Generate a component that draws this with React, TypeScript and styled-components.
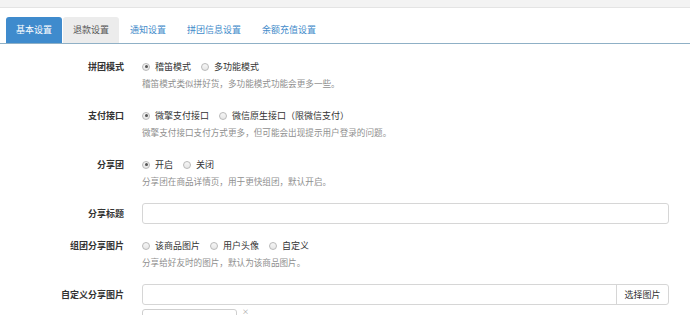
import React, { FC } from 'react'
import styled, { createGlobalStyle } from 'styled-components'

const GlobalStyle = createGlobalStyle`
    html, body {
        margin: 0;
        padding: 0;
        overflow: hidden;
        background: #fff;
        font-family: "Noto Sans CJK SC", "Noto Sans", sans-serif;
        color: #333;
    }
`

const tabs = ['基本设置', '退款设置', '通知设置', '拼团信息设置', '余额充值设置']

interface RadioOption {
    label: string
    checked?: boolean
}

interface FormRow {
    label: string
    kind: 'radio' | 'input' | 'picker'
    options?: RadioOption[]
    help?: string
}

const rows: FormRow[] = [
    {
        label: '拼团模式',
        kind: 'radio',
        options: [{ label: '稽笛模式', checked: true }, { label: '多功能模式' }],
        help: '稽笛模式类似拼好货，多功能模式功能会更多一些。'
    },
    {
        label: '支付接口',
        kind: 'radio',
        options: [{ label: '微擎支付接口', checked: true }, { label: '微信原生接口（限微信支付）' }],
        help: '微擎支付接口支付方式更多，但可能会出现提示用户登录的问题。'
    },
    {
        label: '分享团',
        kind: 'radio',
        options: [{ label: '开启', checked: true }, { label: '关闭' }],
        help: '分享团在商品详情页，用于更快组团，默认开启。'
    },
    { label: '分享标题', kind: 'input' },
    {
        label: '组团分享图片',
        kind: 'radio',
        options: [{ label: '该商品图片' }, { label: '用户头像' }, { label: '自定义' }],
        help: '分享给好友时的图片，默认为该商品图片。'
    },
    { label: '自定义分享图片', kind: 'picker' }
]

const App: FC = () => {
    return (
        <Page>
            <GlobalStyle />
            <TopStrip />
            <TabBar>
                {tabs.map((t, i) => (
                    <Tab key={t} $variant={i === 0 ? 'active' : i === 1 ? 'hover' : 'normal'}>
                        {t}
                    </Tab>
                ))}
            </TabBar>
            <Form>
                {rows.map(row => (
                    <Group key={row.label}>
                        <Label>{row.label}</Label>
                        <Control>
                            {row.kind === 'radio' && (
                                <RadioLine>
                                    {row.options!.map(o => (
                                        <RadioItem key={o.label}>
                                            <RadioDot $checked={!!o.checked} />
                                            {o.label}
                                        </RadioItem>
                                    ))}
                                </RadioLine>
                            )}
                            {row.kind === 'input' && <TextInput />}
                            {row.kind === 'picker' && (
                                <>
                                    <InputGroup>
                                        <GroupInput />
                                        <AddonButton>选择图片</AddonButton>
                                    </InputGroup>
                                    <Preview>
                                        <Thumb />
                                        <Close>×</Close>
                                    </Preview>
                                </>
                            )}
                            {row.help && <Help>{row.help}</Help>}
                        </Control>
                    </Group>
                ))}
            </Form>
        </Page>
    )
}

export default App

const Page = styled.div`
    width: 690px;
    height: 315px;
    overflow: hidden;
`

const TopStrip = styled.div`
    height: 7px;
    background: #f3f3f3;
    border-bottom: 1px solid #e4e4e4;
`

const TabBar = styled.div`
    display: flex;
    margin-top: 9px;
    padding-left: 6px;
    border-bottom: 1px solid #8fb0c6;
`

const Tab = styled.div<{ $variant: 'active' | 'hover' | 'normal' }>`
    height: 26px;
    line-height: 26px;
    padding: 0 10px;
    margin-right: 1px;
    font-size: 9px;
    border-radius: 3px 3px 0 0;
    background: ${p => p.$variant === 'active' ? '#3f8bcd' : p.$variant === 'hover' ? '#ececec' : 'transparent'};
    color: ${p => p.$variant === 'active' ? '#fff' : p.$variant === 'hover' ? '#555' : '#428bca'};
`

const Form = styled.div`
    padding: 12px 21px 0 0;
`

const Group = styled.div`
    display: grid;
    grid-template-columns: 124px 1fr;
    column-gap: 18px;
    align-items: start;
    margin-bottom: 11px;
`

const Label = styled.div`
    text-align: right;
    font-size: 9px;
    font-weight: 700;
    line-height: 21px;
    color: #333;
`

const Control = styled.div`
    display: flex;
    flex-direction: column;
    min-width: 0;
`

const RadioLine = styled.div`
    display: flex;
    align-items: center;
    gap: 10px;
    height: 21px;
`

const RadioItem = styled.span`
    display: inline-flex;
    align-items: center;
    gap: 5px;
    font-size: 9px;
    color: #333;
`

const RadioDot = styled.span<{ $checked: boolean }>`
    position: relative;
    width: 8px;
    height: 8px;
    box-sizing: border-box;
    border-radius: 50%;
    border: 1px solid #b9b9b9;
    background: linear-gradient(#f7f7f7, #e6e6e6);

    &::after {
        content: '';
        display: ${p => p.$checked ? 'block' : 'none'};
        position: absolute;
        left: 1.5px;
        top: 1.5px;
        width: 3px;
        height: 3px;
        border-radius: 50%;
        background: #555;
    }
`

const Help = styled.div`
    font-size: 8.6px;
    line-height: 12px;
    color: #8f8f8f;
    margin-bottom: 5px;
`

const TextInput = styled.div`
    height: 21px;
    box-sizing: border-box;
    border: 1px solid #d6d6d6;
    border-radius: 3px;
    background: #fff;
`

const InputGroup = styled.div`
    display: flex;
    height: 21px;
    box-sizing: border-box;
    border: 1px solid #d6d6d6;
    border-radius: 3px;
    background: #fff;
`

const GroupInput = styled.div`
    flex: 1;
`

const AddonButton = styled.div`
    width: 51px;
    border-left: 1px solid #d6d6d6;
    font-size: 9px;
    line-height: 19px;
    text-align: center;
    color: #333;
`

const Preview = styled.div`
    display: flex;
    align-items: flex-start;
    gap: 5px;
    margin-top: 4px;
`

const Thumb = styled.div`
    width: 95px;
    height: 70px;
    box-sizing: border-box;
    border: 1px solid #cfcfcf;
    border-radius: 3px;
    background: #fff;
`

const Close = styled.span`
    font-size: 7px;
    line-height: 5px;
    height: 5px;
    color: #999;
`
